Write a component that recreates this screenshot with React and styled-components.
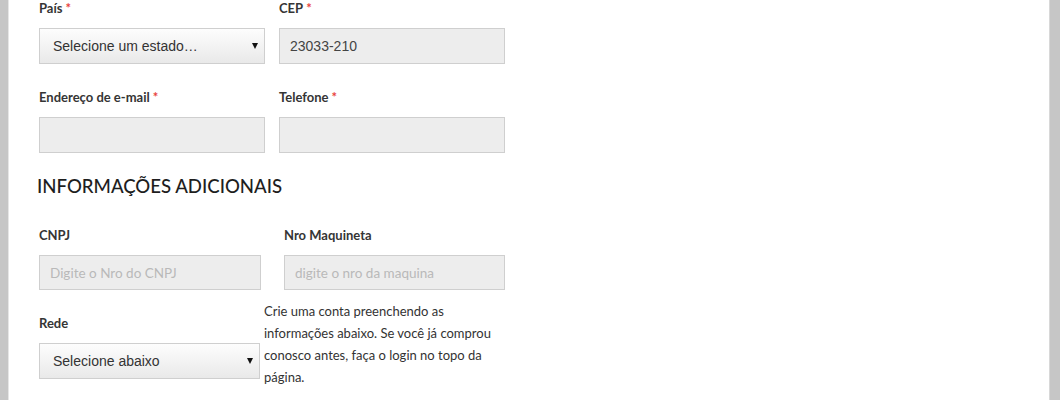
import React from "react";
import styled, { createGlobalStyle } from "styled-components";

const Global = createGlobalStyle`
  html, body { margin: 0; padding: 0; background: #c6c6c6; }
  body { font-family: Lato, "Open Sans", sans-serif; overflow: hidden; }
`;

const Card = styled.div`
  margin: 0 10px 0 8px;
  background: #fff;
  height: 400px;
  box-sizing: border-box;
  padding: 0 0 0 31px;
  box-shadow: inset 1px 0 0 #e6e6e6, inset -1px 0 0 #d8d8d8;
`;

const Row = styled.div`
  display: grid;
  grid-template-columns: ${(p) => p.$cols};
  column-gap: ${(p) => p.$gap}px;
  width: 466px;
  margin-bottom: ${(p) => p.$mb || 0}px;
`;

const Field = styled.div`
  display: flex;
  flex-direction: column;
  padding-top: ${(p) => p.$pt || 0}px;
`;

const Label = styled.label`
  font-family: Lato, sans-serif;
  font-weight: 700;
  font-size: 13px;
  line-height: 16px;
  color: #353535;
  margin-bottom: 12px;
`;

const Req = styled.span`
  color: #e8413c;
  margin-left: 3px;
`;

const Input = styled.input`
  box-sizing: border-box;
  width: 100%;
  height: ${(p) => p.$h || 36}px;
  margin: 0;
  border: 1px solid #cfcfcf;
  background: #ededed;
  padding: 0 10px;
  font-family: ${(p) => (p.$lato ? "Lato, sans-serif" : '"Liberation Sans", Arial, sans-serif')};
  font-size: ${(p) => (p.$lato ? 13.5 : 14)}px;
  color: #444;
  outline: none;
  &::placeholder { color: #b9b9b9; }
`;

const SelectWrap = styled.div`
  position: relative;
  width: 100%;
  &::after {
    content: "";
    position: absolute;
    right: 7px;
    top: 15px;
    border-left: 3.5px solid transparent;
    border-right: 3.5px solid transparent;
    border-top: 6px solid #111;
    pointer-events: none;
  }
`;

const Select = styled.select`
  appearance: none;
  -webkit-appearance: none;
  box-sizing: border-box;
  width: 100%;
  height: 36px;
  margin: 0;
  border: 1px solid #cfcfcf;
  border-radius: 0;
  background: linear-gradient(#fdfdfd, #e9e9e9);
  padding: 0 13px;
  font-family: "Liberation Sans", Arial, sans-serif;
  font-size: 14px;
  color: #333;
  outline: none;
`;

const Heading = styled.h3`
  margin: 21px 0 29px -2px;
  font-family: Lato, sans-serif;
  font-weight: 500;
  font-size: 18.6px;
  line-height: 24px;
  color: #1e1e1e;
  letter-spacing: 0;
`;

const Note = styled.p`
  margin: 10px 0 0;
  font-family: Lato, sans-serif;
  font-size: 13px;
  line-height: 22px;
  color: #333;
`;

export default function App() {
  return (
    <>
      <Global />
      <Card>
        <Row $cols="226px 226px" $gap={14} $mb={25}>
          <Field>
            <Label>País<Req>*</Req></Label>
            <SelectWrap>
              <Select defaultValue="">
                <option value="">Selecione um estado…</option>
              </Select>
            </SelectWrap>
          </Field>
          <Field>
            <Label>CEP<Req>*</Req></Label>
            <Input defaultValue="23033-210" />
          </Field>
        </Row>
        <Row $cols="226px 226px" $gap={14}>
          <Field>
            <Label>Endereço de e-mail<Req>*</Req></Label>
            <Input />
          </Field>
          <Field>
            <Label>Telefone<Req>*</Req></Label>
            <Input />
          </Field>
        </Row>
        <Heading>INFORMAÇÕES ADICIONAIS</Heading>
        <Row $cols="222px 221px" $gap={23}>
          <Field>
            <Label>CNPJ</Label>
            <Input $h={35} $lato placeholder="Digite o Nro do CNPJ" />
          </Field>
          <Field>
            <Label>Nro Maquineta</Label>
            <Input $h={35} $lato placeholder="digite o nro da maquina" />
          </Field>
        </Row>
        <Row $cols="221px 241px" $gap={4}>
          <Field $pt={25}>
            <Label>Rede</Label>
            <SelectWrap>
              <Select defaultValue="">
                <option value="">Selecione abaixo</option>
              </Select>
            </SelectWrap>
          </Field>
          <Note>
            Crie uma conta preenchendo as informações abaixo. Se você já comprou
            conosco antes, faça o login no topo da página.
          </Note>
        </Row>
      </Card>
    </>
  );
}
